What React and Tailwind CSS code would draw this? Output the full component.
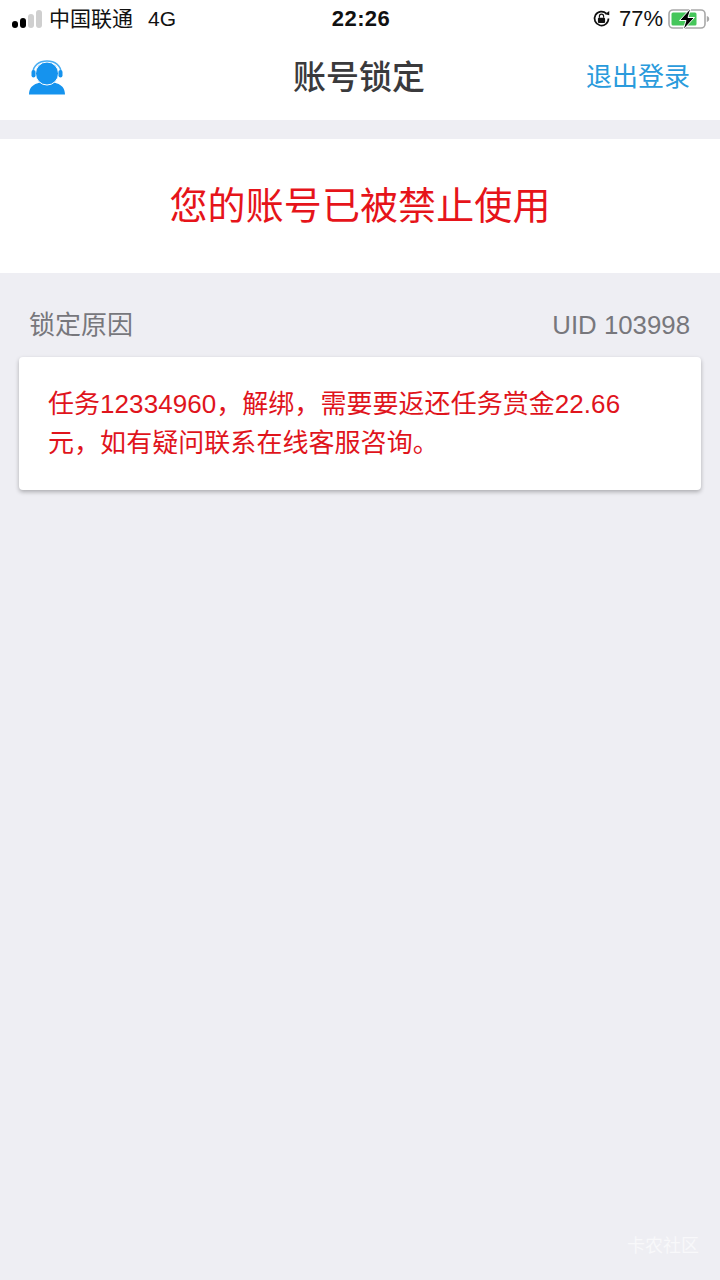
import React from 'react';

const FONT = "font-['Liberation_Sans','Noto_Sans_CJK_SC',sans-serif]";

const Signal = () => (
  <div className="flex items-end gap-[2px] w-[30px]">
    <div className="w-[6px] h-[7px] rounded-[3px] bg-black" />
    <div className="w-[6px] h-[10px] rounded-[3px] bg-black" />
    <div className="w-[6px] h-[14px] rounded-[3px] bg-[#cfcfcf]" />
    <div className="w-[6px] h-[18px] rounded-[3px] bg-[#cfcfcf]" />
  </div>
);

const RotationLock = () => (
  <svg width="19" height="19" viewBox="0 0 18 18">
    <path d="M15.6 9a6.6 6.6 0 1 1-1.9-4.6" fill="none" stroke="#111" strokeWidth="1.6" />
    <path d="M12.4 5.2l4.2.4-.6-4z" fill="#111" transform="rotate(8 14 4)" />
    <rect x="5.6" y="8.2" width="6.8" height="5" rx="1" fill="#111" />
    <path d="M7 8.2V6.8a2 2 0 0 1 4 0v1.4" fill="none" stroke="#111" strokeWidth="1.1" />
  </svg>
);

const Battery = () => (
  <svg width="42" height="22" viewBox="0 0 42 22">
    <rect x="1" y="2" width="36" height="18" rx="4" fill="none" stroke="#a8a8a8" strokeWidth="1.6" />
    <rect x="3.5" y="4.5" width="25" height="13" rx="1.5" fill="#45c65a" />
    <path d="M38.8 8v6c1.6-.4 2.4-1.6 2.4-3s-.8-2.6-2.4-3z" fill="#a8a8a8" />
    <path d="M23 0 11.5 12.5h6.5L15 22 26.5 9.5H20z" fill="#000" stroke="#fff" strokeWidth="1" />
  </svg>
);

const Agent = () => (
  <svg width="38" height="37" viewBox="0 0 38 37">
    <path d="M1 35.5c0-6.5 3.6-9.6 8-11 2-.7 4-1.2 5.5-1.5h9c1.5.3 3.5.8 5.5 1.5 4.4 1.4 8 4.5 8 11z" fill="#1593ee" />
    <circle cx="19" cy="14.5" r="11.5" fill="#1593ee" stroke="#fff" strokeWidth="1" />
    <path d="M5 14C5 6.2 11.2 2 19 2s14 4.200 14 12" fill="none" stroke="#4aaef2" strokeWidth="1.5" />
    <rect x="3.5" y="11" width="4" height="7.5" rx="2" fill="#1593ee" />
    <rect x="30.5" y="11" width="4" height="7.5" rx="2" fill="#1593ee" />
  </svg>
);

const App = () => {
  return (
    <div className={`relative flex flex-col h-[1280px] w-[720px] bg-[#eeeef3] overflow-hidden ${FONT}`}>
      <div className="bg-white h-[120px] flex flex-col">
        <div className="h-[37px] pl-3 pr-[10px] grid grid-cols-[1fr_auto_1fr] items-center text-[21px] text-[#111]">
          <div className="flex items-center gap-[7px]">
            <Signal />
            <span>中国联通</span>
            <span className="ml-[8px]">4G</span>
          </div>
          <span className="font-bold text-[22px] tracking-[0.4px]">22:26</span>
          <div className="flex items-center justify-end gap-[5px]">
            <RotationLock />
            <span className="ml-[3px] text-[22px]">77%</span>
            <Battery />
          </div>
        </div>
        <div className="flex-1 grid grid-cols-[1fr_auto_1fr] items-center pl-[28px] pr-[30px] pb-[2px]">
          <Agent />
          <span className="text-[33px] font-medium text-[#3a3a3c]">账号锁定</span>
          <span className="justify-self-end text-[26px] text-[#2a9bdc]">退出登录</span>
        </div>
      </div>

      <div className="mt-[19px] bg-white h-[134px] flex items-center justify-center">
        <span className="text-[38px] tracking-[0.1px] text-[#e6141a]">您的账号已被禁止使用</span>
      </div>

      <div className="flex items-center justify-between pl-[29px] pr-[30px] mt-[34px] h-[36px] text-[26px] text-[#77777c]">
        <span>锁定原因</span>
        <span className="text-[25.8px]">UID 103998</span>
      </div>

      <div className="mx-[19px] mt-[14px] h-[133px] bg-white rounded-[4px] shadow-[0_2px_4px_rgba(0,0,0,0.28)] pl-[29px] pr-[60px] pt-[28px] text-[26px] leading-[39px] tracking-[0.05px] text-[#e0141c]">
        任务12334960，解绑，需要要返还任务赏金22.66元，如有疑问联系在线客服咨询。
      </div>

      <span className="absolute right-[21px] bottom-[20px] text-[18px] text-white/60">卡农社区</span>
    </div>
  );
};

export default App;
